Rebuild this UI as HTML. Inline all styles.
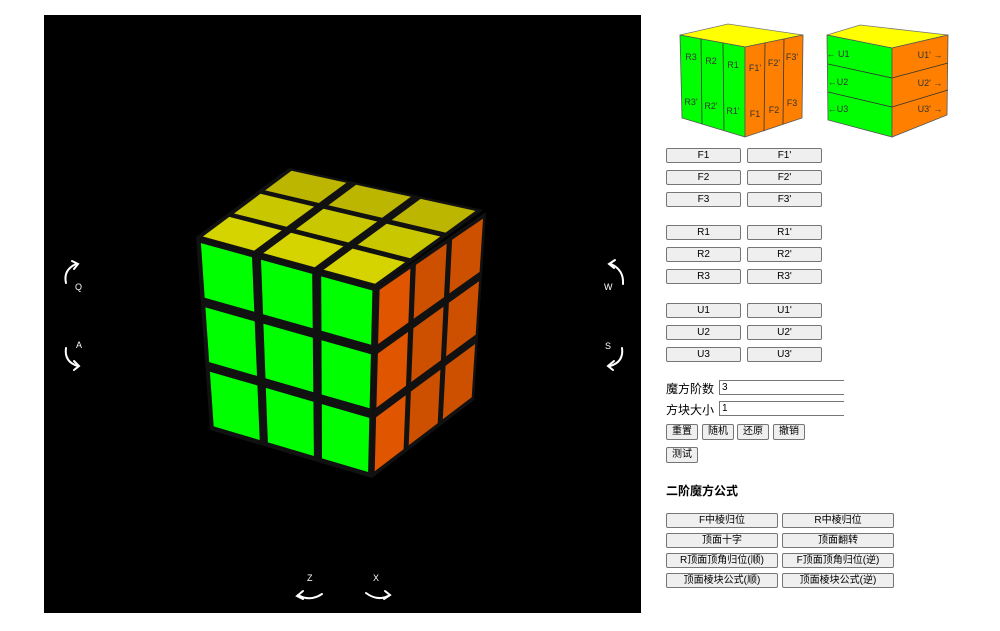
<!DOCTYPE html>
<html><head><meta charset="utf-8"><style>
body{margin:0;width:1000px;height:631px;background:#fff;position:relative;overflow:hidden;font-family:"Liberation Sans","Noto Sans CJK SC",sans-serif;}
.a{position:absolute}
.b{position:absolute;height:15px;box-sizing:border-box;border:1px solid #767676;border-radius:2px;background:#efefef;font-size:10px;line-height:13px;text-align:center;color:#000}
.l{position:absolute;font-size:12px;color:#000}
.i{position:absolute;height:15px;box-sizing:border-box;border:1px solid #767676;border-right:none;font-size:10px;line-height:13px;padding-left:2px;width:125px;left:719px}
.t{position:absolute;color:#fff;font-size:9px}
</style></head><body>
<div class="a" style="left:44px;top:15px;width:597px;height:598px;background:#000"></div>
<svg class="a" style="left:0;top:0" width="1000" height="631" id="s">
<g fill="none" stroke="#fff" stroke-width="2" stroke-linecap="round">
<path d="M66 283 Q63 270 76 264"/><path d="M72 261 L78 264 L74 269"/>
<path d="M66 348 Q64 362 78 366"/><path d="M74 361 L79 366 L74 370"/>
<path d="M623 284 Q624 270 611 264"/><path d="M615 260 L609 264 L614 268"/>
<path d="M622 348 Q624 362 610 366"/><path d="M614 361 L608 366 L613 370"/>
<path d="M298 595 Q310 602 322 594"/><path d="M303 591 L297 596 L303 599"/>
<path d="M366 593 Q378 602 390 595"/><path d="M385 591 L390 595 L384 599"/>
</g>
<g fill="#fff" font-size="9" font-family="Liberation Sans,sans-serif">
<text x="75" y="290">Q</text><text x="76" y="348">A</text>
<text x="604" y="290">W</text><text x="605" y="349">S</text>
<text x="307" y="581">Z</text><text x="373" y="581">X</text>
</g>
</svg>
<div class="b" style="left:666px;top:148px;width:75px">F1</div><div class="b" style="left:747px;top:148px;width:75px">F1'</div>
<div class="b" style="left:666px;top:170px;width:75px">F2</div><div class="b" style="left:747px;top:170px;width:75px">F2'</div>
<div class="b" style="left:666px;top:192px;width:75px">F3</div><div class="b" style="left:747px;top:192px;width:75px">F3'</div>
<div class="b" style="left:666px;top:225px;width:75px">R1</div><div class="b" style="left:747px;top:225px;width:75px">R1'</div>
<div class="b" style="left:666px;top:247px;width:75px">R2</div><div class="b" style="left:747px;top:247px;width:75px">R2'</div>
<div class="b" style="left:666px;top:269px;width:75px">R3</div><div class="b" style="left:747px;top:269px;width:75px">R3'</div>
<div class="b" style="left:666px;top:303px;width:75px">U1</div><div class="b" style="left:747px;top:303px;width:75px">U1'</div>
<div class="b" style="left:666px;top:325px;width:75px">U2</div><div class="b" style="left:747px;top:325px;width:75px">U2'</div>
<div class="b" style="left:666px;top:347px;width:75px">U3</div><div class="b" style="left:747px;top:347px;width:75px">U3'</div>
<div class="l" style="left:666px;top:380px">魔方阶数</div><div class="i" style="top:380px">3</div>
<div class="l" style="left:666px;top:401px">方块大小</div><div class="i" style="top:401px">1</div>
<div class="b" style="left:666px;top:424px;width:32px;height:16px">重置</div>
<div class="b" style="left:702px;top:424px;width:32px;height:16px">随机</div>
<div class="b" style="left:737px;top:424px;width:32px;height:16px">还原</div>
<div class="b" style="left:773px;top:424px;width:32px;height:16px">撤销</div>
<div class="b" style="left:666px;top:447px;width:32px;height:16px">测试</div>
<div class="l" style="left:666px;top:482px;font-weight:bold;font-size:12px">二阶魔方公式</div>
<div class="b" style="left:666px;top:513px;width:112px">F中棱归位</div><div class="b" style="left:782px;top:513px;width:112px">R中棱归位</div>
<div class="b" style="left:666px;top:533px;width:112px">顶面十字</div><div class="b" style="left:782px;top:533px;width:112px">顶面翻转</div>
<div class="b" style="left:666px;top:553px;width:112px">R顶面顶角归位(顺)</div><div class="b" style="left:782px;top:553px;width:112px">F顶面顶角归位(逆)</div>
<div class="b" style="left:666px;top:573px;width:112px">顶面棱块公式(顺)</div><div class="b" style="left:782px;top:573px;width:112px">顶面棱块公式(逆)</div>
<script>
var s=document.getElementById('s'),NS='http://www.w3.org/2000/svg';
function poly(p,f,st){var e=document.createElementNS(NS,'polygon');e.setAttribute('points',p.map(function(q){return q[0].toFixed(1)+','+q[1].toFixed(1)}).join(' '));e.setAttribute('fill',f);if(st){e.setAttribute('stroke',st);e.setAttribute('stroke-width','0.8');}s.appendChild(e);}
function txt(x,y,t,sz){var e=document.createElementNS(NS,'text');e.setAttribute('x',x);e.setAttribute('y',y);e.setAttribute('font-size',sz||9);e.setAttribute('fill','#333');e.setAttribute('text-anchor','middle');e.setAttribute('font-family','Liberation Sans,sans-serif');e.textContent=t;s.appendChild(e);}
function bl(c,u,v){var a=c[0],b=c[1],d=c[2],e=c[3];return[(1-u)*(1-v)*a[0]+u*(1-v)*b[0]+u*v*d[0]+(1-u)*v*e[0],(1-u)*(1-v)*a[1]+u*(1-v)*b[1]+u*v*d[1]+(1-u)*v*e[1]];}
function face(c,col,n,g){poly(c,'#111');for(var i=0;i<n;i++)for(var j=0;j<n;j++){var u0=i/n+g,u1=(i+1)/n-g,v0=j/n+g,v1=(j+1)/n-g;poly([bl(c,u0,v0),bl(c,u1,v0),bl(c,u1,v1),bl(c,u0,v1)],typeof col=='function'?col(i,j):col);}}
// main cube: corners TL,TR,BR,BL
face([[289,168],[483,210],[377,287],[196,237]],function(i,j){return j<1?'#bcb600':(j<2?'#c9c700':'#d6d400')},3,0.025);
face([[196,237],[377,287],[372,478],[210,430]],'#00ff00',3,0.025);
face([[377,287],[486,212],[474,400],[372,478]],function(i,j){return i==0?'#e05500':'#cc5000'},3,0.025);
// small cube 1
poly([[680,35],[728,24],[803,35],[745,47]],'#ffff00','#777');
poly([[680,35],[745,47],[745,137],[682,118]],'#00ff00','#555');
poly([[745,47],[803,35],[802,118],[745,137]],'#ff8000','#555');
function ln(a,b){var e=document.createElementNS(NS,'line');e.setAttribute('x1',a[0]);e.setAttribute('y1',a[1]);e.setAttribute('x2',b[0]);e.setAttribute('y2',b[1]);e.setAttribute('stroke','#333');e.setAttribute('stroke-width','0.8');s.appendChild(e);}
ln([701,39],[702,124]);ln([723,43],[724,130]);ln([765,43],[764,131]);ln([784,39],[783,124]);
txt(691,60,'R3');txt(711,64,'R2');txt(733,68,'R1');txt(755,71,'F1\'');txt(774,66,'F2\'');txt(792,60,'F3\'');
txt(691,105,'R3\'');txt(711,109,'R2\'');txt(733,114,'R1\'');txt(755,117,'F1');txt(774,113,'F2');txt(792,106,'F3');
// small cube 2
poly([[827,35],[860,25],[948,35],[892,48]],'#ffff00','#777');
poly([[827,35],[892,48],[892,137],[828,120]],'#00ff00','#555');
poly([[892,48],[948,35],[947,115],[892,137]],'#ff8000','#555');
ln([828,64],[892,78]);ln([828,92],[892,107]);ln([892,78],[948,63]);ln([892,107],[948,90]);
txt(838,57,'← U1');txt(838,85,'←U2');txt(838,112,'←U3');txt(930,58,'U1\' →');txt(930,86,'U2\' →');txt(930,112,'U3\' →');
</script>
</body></html>
